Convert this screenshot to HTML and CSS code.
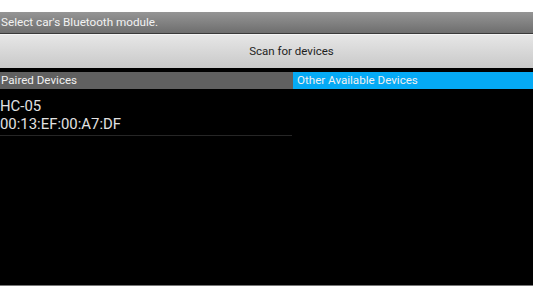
FILE: index.html
```html
<!DOCTYPE html>
<html>
<head>
<meta charset="utf-8">
<link rel="stylesheet" href="styles.css">
</head>
<body>
<div class="screen">
  <div class="top-gap"></div>
  <div class="title">Select car's Bluetooth module.</div>
  <div class="scan">Scan for devices</div>
  <div class="gap"></div>
  <div class="columns">
    <div class="col">
      <div class="head paired">Paired Devices</div>
      <div class="item">
        <div class="name">HC-05</div>
        <div class="addr">00:13:EF:00:A7:DF</div>
      </div>
    </div>
    <div class="col">
      <div class="head other">Other Available Devices</div>
    </div>
  </div>
  <div class="bottom"></div>
</div>
</body>
</html>
```
FILE: styles.css
```css
html, body {
  margin: 0;
  padding: 0;
  background: #fff;
}
.screen {
  width: 533px;
  height: 300px;
  display: flex;
  flex-direction: column;
  font-family: Roboto, "Liberation Sans", sans-serif;
}
.top-gap {
  height: 12px;
  background: #fff;
}
.title {
  height: 22px;
  box-sizing: border-box;
  background: linear-gradient(#959595, #6e6e6e);
  border-bottom: 1px solid #3a3a3a;
  color: #f2f2f2;
  font-size: 11.7px;
  line-height: 21px;
  padding-left: 1px;
}
.scan {
  height: 34px;
  background: linear-gradient(#e6e6e6, #c9c9c9);
  border-top: 1px solid #f4f4f4;
  box-sizing: border-box;
  color: #1e1e1e;
  font-size: 11.5px;
  text-align: center;
  line-height: 32px;
  padding-left: 50px;
}
.gap {
  height: 4px;
  background: #000;
}
.columns {
  flex: 1;
  display: grid;
  grid-template-columns: 293px 1fr;
  background: #000;
}
.col {
  display: flex;
  flex-direction: column;
}
.head {
  height: 17px;
  font-size: 11.6px;
  line-height: 17px;
  color: #f0f0f0;
}
.paired {
  background: #606060;
  padding-left: 1px;
}
.other {
  background: #05aaf5;
  padding-left: 4px;
}
.item {
  color: #e2e2e2;
  font-size: 14.9px;
  line-height: 18px;
  padding-top: 8px;
  height: 38px;
  border-bottom: 1px solid #262626;
  margin-right: 1px;
}
.bottom {
  height: 14px;
  background: #fff;
  border-top: 1px solid #777;
}
```
